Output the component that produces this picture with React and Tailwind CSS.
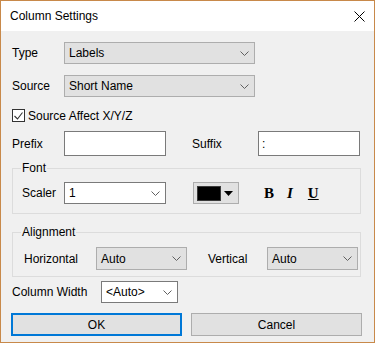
import React from 'react';
import clsx from 'clsx';

const Chevron = () => (
  <svg width="9" height="5" viewBox="0 0 9 5" className="shrink-0">
    <path d="M0.5 0.5L4.5 4.5L8.5 0.5" fill="none" stroke="#606060" strokeWidth="1" />
  </svg>
);

function Combo({ value, editable, className }) {
  return (
    <div
      className={clsx(
        'flex items-center justify-between border pl-[4px] pr-[5px]',
        editable ? 'bg-white border-[#7a7a7a]' : 'bg-[#e1e1e1] border-[#adadad]',
        className
      )}
    >
      <span>{value}</span>
      <Chevron />
    </div>
  );
}

function GroupBox({ title, className, children }) {
  return (
    <div className={clsx('relative w-[349px] border border-[#dcdcdc]', className)}>
      <span className="absolute -top-[8px] left-[8px] bg-[#f0f0f0] px-[1px] leading-[15px]">{title}</span>
      {children}
    </div>
  );
}

export default function App() {
  return (
    <div
      className="w-[375px] h-[343px] border border-[#c8894a] bg-[#f0f0f0] flex flex-col text-[12px] text-black"
      style={{ fontFamily: '"Liberation Sans", Arial, sans-serif' }}
    >
      <div className="h-[30px] bg-white flex items-center justify-between pl-[9px] pr-[9px]">
        <span>Column Settings</span>
        <svg width="11" height="11" viewBox="0 0 11 11">
          <path d="M0.5 0.5L10.5 10.5M10.5 0.5L0.5 10.5" stroke="#000" strokeWidth="1" />
        </svg>
      </div>

      <div className="flex flex-col pl-[11px]">
        <div className="mt-[11px] flex items-center h-[22px]">
          <span className="w-[52px]">Type</span>
          <Combo value="Labels" className="w-[191px] h-[22px]" />
        </div>

        <div className="mt-[11px] flex items-center h-[22px]">
          <span className="w-[52px]">Source</span>
          <Combo value="Short Name" className="w-[191px] h-[22px]" />
        </div>

        <div className="mt-[12px] flex items-center h-[13px]">
          <div className="w-[13px] h-[13px] border border-[#333] bg-white flex items-center justify-center">
            <svg width="9" height="8" viewBox="0 0 9 8">
              <path d="M0.5 4L3.5 7L8.5 0.5" fill="none" stroke="#333" strokeWidth="1.1" />
            </svg>
          </div>
          <span className="ml-[3px]">Source Affect X/Y/Z</span>
        </div>

        <div className="mt-[9px] flex items-center h-[25px]">
          <span className="w-[52px]">Prefix</span>
          <div className="w-[102px] h-[25px] bg-white border border-[#7a7a7a]" />
          <span className="ml-[26px] w-[66px]">Suffix</span>
          <div className="w-[102px] h-[25px] bg-white border border-[#7a7a7a] flex items-center pl-[3px]">:</div>
        </div>

        <GroupBox title="Font" className="mt-[12px] h-[46px]">
          <div className="flex items-center pt-[13px] pl-[9px]">
            <span className="w-[42px]">Scaler</span>
            <Combo value="1" editable className="w-[102px] h-[22px]" />
            <div className="ml-[27px] w-[46px] h-[22px] bg-[#e1e1e1] border border-[#adadad] flex items-center pl-[3px]">
              <div className="w-[24px] h-[15px] bg-black border border-[#3a3a3a]" />
              <svg width="9" height="5" viewBox="0 0 9 5" className="ml-[3px]">
                <path d="M0 0H9L4.5 5Z" fill="#000" />
              </svg>
            </div>
            <div
              className="ml-[25px] flex items-center text-[15px] font-bold"
              style={{ fontFamily: '"Liberation Serif", "Times New Roman", serif' }}
            >
              <span>B</span>
              <span className="ml-[13px] italic">I</span>
              <span className="ml-[15px] underline">U</span>
            </div>
          </div>
        </GroupBox>

        <GroupBox title="Alignment" className="mt-[18px] h-[45px]">
          <div className="flex items-center pt-[14px] pl-[11px]">
            <span className="w-[72px]">Horizontal</span>
            <Combo value="Auto" className="w-[91px] h-[23px]" />
            <span className="ml-[21px] w-[59px]">Vertical</span>
            <Combo value="Auto" className="w-[91px] h-[23px]" />
          </div>
        </GroupBox>

        <div className="mt-[4px] flex items-center h-[22px]">
          <span className="w-[89px]">Column Width</span>
          <Combo value="<Auto>" editable className="w-[77px] h-[22px]" />
        </div>

        <div className="mt-[10px] flex items-center h-[23px]">
          <button className="-ml-px w-[171px] h-[23px] bg-[#e1e1e1] border-2 border-[#0078d7] flex items-center justify-center">
            OK
          </button>
          <button className="ml-[9px] w-[171px] h-[23px] bg-[#e1e1e1] border border-[#adadad] flex items-center justify-center">
            Cancel
          </button>
        </div>
      </div>
    </div>
  );
}
